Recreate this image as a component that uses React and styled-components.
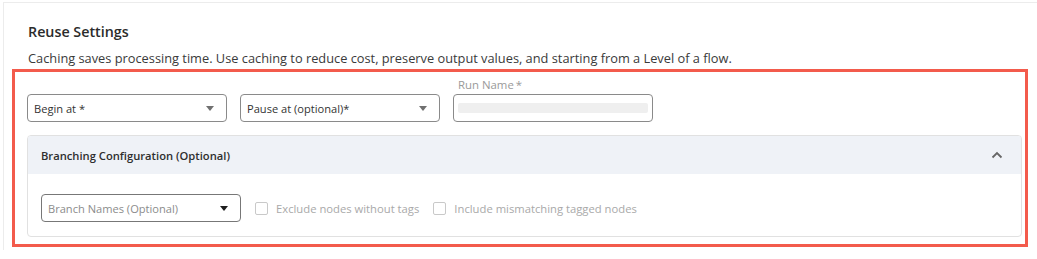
import React from "react";
import styled, { createGlobalStyle } from "styled-components";

const Global = createGlobalStyle`
  html, body { margin: 0; padding: 0; background: #fff; }
  body { font-family: "Open Sans", "Noto Sans", sans-serif; color: #333; }
`;

const Card = styled.div`
  margin: 2px 0 0 3px;
  height: 248px;
  border-top: 1px solid #ececec;
  border-left: 1px solid #ececec;
  box-sizing: border-box;
  display: flex;
  flex-direction: column;
`;

const Header = styled.div`
  padding: 19px 0 0 24px;
`;

const Title = styled.h2`
  margin: 0;
  font-size: 14.3px;
  font-weight: 600;
  line-height: 20px;
  color: #2b2b2b;
`;

const Desc = styled.p`
  margin: 7px 0 0 0;
  font-size: 12.8px;
  line-height: 18px;
  color: #3a3a3a;
`;

const Highlight = styled.div`
  margin: 2px 9px 0 8px;
  border: 3px solid #f35b4c;
  padding: 5px 3px 7px 12px;
  display: flex;
  flex-direction: column;
  gap: 13px;
`;

const Row = styled.div`
  display: flex;
  align-items: flex-end;
  gap: 13px;
`;

const Field = styled.div`
  display: flex;
  flex-direction: column;
  gap: 2px;
`;

const Label = styled.span`
  font-size: 11.4px;
  line-height: 15px;
  color: #9a9a9a;
  padding-left: 5px;
  span { margin-left: 2px; }
`;

const Select = styled.div`
  width: 200px;
  height: 28px;
  box-sizing: border-box;
  border: 1px solid ${(p) => (p.$dark ? "#777" : "#8a8a8a")};
  border-radius: 4px;
  display: flex;
  align-items: center;
  justify-content: space-between;
  padding: 0 12px 0 6px;
  font-size: 11.1px;
  color: ${(p) => (p.$placeholder ? "#8c8c8c" : "#333")};
`;

const Caret = styled.span`
  width: 0;
  height: 0;
  border-left: 4.5px solid transparent;
  border-right: 4.5px solid transparent;
  border-top: 5px solid ${(p) => (p.$dark ? "#1e1e1e" : "#707070")};
`;

const Input = styled.div`
  width: 200px;
  height: 28px;
  box-sizing: border-box;
  border: 1px solid #8a8a8a;
  border-radius: 4px;
  display: flex;
  align-items: center;
  padding: 0 4px;
`;

const Blur = styled.div`
  flex: 1;
  height: 10px;
  background: #efefef;
  border-radius: 2px;
`;

const Panel = styled.div`
  border: 1px solid #e1e1e1;
  border-radius: 4px;
  overflow: hidden;
`;

const PanelHead = styled.div`
  height: 38px;
  background: #eff2f7;
  display: flex;
  align-items: center;
  justify-content: space-between;
  padding: 0 18px 0 13px;
  font-size: 11.2px;
  font-weight: 600;
  color: #2e2e2e;
`;

const PanelBody = styled.div`
  padding: 20px 13px 14px 13px;
  display: flex;
  align-items: center;
  gap: 14px;
`;

const Check = styled.label`
  display: flex;
  align-items: center;
  gap: 8px;
  font-size: 11.25px;
  color: #a9a9a9;
`;

const Box = styled.span`
  width: 13px;
  height: 13px;
  box-sizing: border-box;
  border: 1.5px solid #c9c9c9;
  border-radius: 2px;
`;

const Footer = styled.div`
  margin: 3px 17px 0 24px;
  border-top: 1px dashed #ececec;
`;

const Chevron = () => (
  <svg width="12" height="8" viewBox="0 0 12 8">
    <path d="M1.5 6.5 L6 2 L10.5 6.5" fill="none" stroke="#666" strokeWidth="1.8" />
  </svg>
);

export default function App() {
  return (
    <>
      <Global />
      <Card>
        <Header>
          <Title>Reuse Settings</Title>
          <Desc>
            Caching saves processing time. Use caching to reduce cost, preserve output values, and starting from a Level of a flow.
          </Desc>
        </Header>
        <Highlight>
          <Row>
            <Select>
              Begin at *
              <Caret />
            </Select>
            <Select>
              Pause at (optional)*
              <Caret />
            </Select>
            <Field>
              <Label>
                Run Name<span>*</span>
              </Label>
              <Input>
                <Blur />
              </Input>
            </Field>
          </Row>
          <Panel>
            <PanelHead>
              Branching Configuration (Optional)
              <Chevron />
            </PanelHead>
            <PanelBody>
              <Select $placeholder $dark>
                Branch Names (Optional)
                <Caret $dark />
              </Select>
              <Check>
                <Box />
                Exclude nodes without tags
              </Check>
              <Check>
                <Box />
                Include mismatching tagged nodes
              </Check>
            </PanelBody>
          </Panel>
        </Highlight>
        <Footer />
      </Card>
    </>
  );
}
